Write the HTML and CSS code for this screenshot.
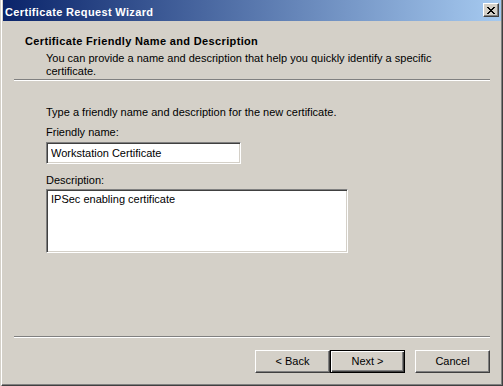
FILE: index.html
```html
<!DOCTYPE html>
<html lang="en">
<head>
    <meta charset="UTF-8">
    <title>Certificate Request Wizard</title>
    <link rel="stylesheet" href="styles.css">
</head>
<body>
    <div class="window">
        <div class="titlebar">
            <span class="title">Certificate Request Wizard</span>
            <button class="close" aria-label="Close">
                <svg width="8" height="7" viewBox="0 0 8 7" shape-rendering="crispEdges">
                    <path d="M0 0h2v1H0z M6 0h2v1H6z M1 1h2v1H1z M5 1h2v1H5z M2 2h4v1H2z M3 3h2v1H3z M2 4h4v1H2z M1 5h2v1H1z M5 5h2v1H5z M0 6h2v1H0z M6 6h2v1H6z" fill="#000"/>
                </svg>
            </button>
        </div>

        <div class="header">
            <h1>Certificate Friendly Name and Description</h1>
            <p>You can provide a name and description that help you quickly identify a specific certificate.</p>
        </div>
        <div class="separator"></div>

        <div class="content">
            <p>Type a friendly name and description for the new certificate.</p>
            <label for="friendly-name">Friendly name:</label>
            <input type="text" id="friendly-name" class="field name-field" value="Workstation Certificate">
            <label for="description" class="desc-label">Description:</label>
            <textarea id="description" class="field desc-field">IPSec enabling certificate</textarea>
        </div>

        <div class="separator bottom"></div>
        <div class="footer">
            <button class="btn">&lt; Back</button>
            <button class="btn default">Next &gt;</button>
            <button class="btn cancel">Cancel</button>
        </div>
    </div>
</body>
</html>
```

FILE: styles.css
```css
* {
    margin: 0;
    padding: 0;
    box-sizing: border-box;
}

body {
    background-color: #D4D0C8;
    font-family: "Liberation Sans", Arial, sans-serif;
    font-size: 11px;
    line-height: 13px;
    color: #000;
    overflow: hidden;
}

.window {
    margin-left: 1px;
    width: 502px;
    height: 386px;
    border-left: 1px solid #fff;
    border-right: 1px solid #404040;
    border-bottom: 1px solid #404040;
    padding-left: 1px;
    box-shadow: inset -1px -1px #808080;
    display: flex;
    flex-direction: column;
}

.titlebar {
    height: 21px;
    margin-right: 1px;
    padding: 3px 2px 0 2px;
    background: linear-gradient(to right, #0A246A, #A6CAF0);
    display: flex;
    align-items: flex-start;
}

.title {
    flex: 1;
    color: #fff;
    font-weight: bold;
    letter-spacing: 0.35px;
    line-height: 18px;
}

.close {
    width: 16px;
    height: 14px;
    background-color: #D4D0C8;
    border: 1px solid;
    border-color: #fff #404040 #404040 #fff;
    box-shadow: inset -1px -1px #808080;
    display: flex;
    align-items: center;
    justify-content: center;
    padding-right: 1px;
}

.close svg {
    display: block;
}

.header {
    padding-top: 14px;
}

.header h1 {
    font-size: 11px;
    font-weight: bold;
    letter-spacing: 0.35px;
    margin-left: 22px;
}

.header p {
    margin: 4px 0 0 43px;
    width: 400px;
}

.separator {
    height: 2px;
    margin: 1px 12px 0 11px;
    border-top: 1px solid #808080;
    border-bottom: 1px solid #fff;
}

.separator.bottom {
    margin-top: 0;
}

.content {
    flex: 1;
    padding: 25px 0 0 43px;
}

.content label {
    display: block;
    margin-top: 7px;
}

.content .desc-label {
    margin-top: 10px;
}

.field {
    display: block;
    background-color: #fff;
    border: 1px solid;
    border-color: #808080 #fff #fff #808080;
    box-shadow: inset 1px 1px #404040, inset -1px -1px #D4D0C8;
    font-family: inherit;
    font-size: 11px;
    line-height: 13px;
    color: #000;
    outline: none;
}

.name-field {
    margin-top: 3px;
    width: 195px;
    height: 22px;
    padding: 0 4px;
}

.desc-field {
    margin-top: 2px;
    width: 302px;
    height: 64px;
    padding: 3px 4px;
    resize: none;
    overflow: hidden;
}

.footer {
    display: flex;
    justify-content: flex-end;
    padding: 12px 12px 12px 0;
}

.btn {
    width: 75px;
    height: 23px;
    background-color: #D4D0C8;
    font-family: inherit;
    font-size: 11px;
    line-height: 13px;
    color: #000;
    border: 1px solid;
    border-color: #fff #404040 #404040 #fff;
    box-shadow: inset -1px -1px #808080;
}

.btn.default {
    border-color: #000;
    box-shadow: inset 1px 1px #fff, inset -1px -1px #404040, inset -2px -2px #808080;
}

.btn.cancel {
    margin-left: 10px;
}
```
